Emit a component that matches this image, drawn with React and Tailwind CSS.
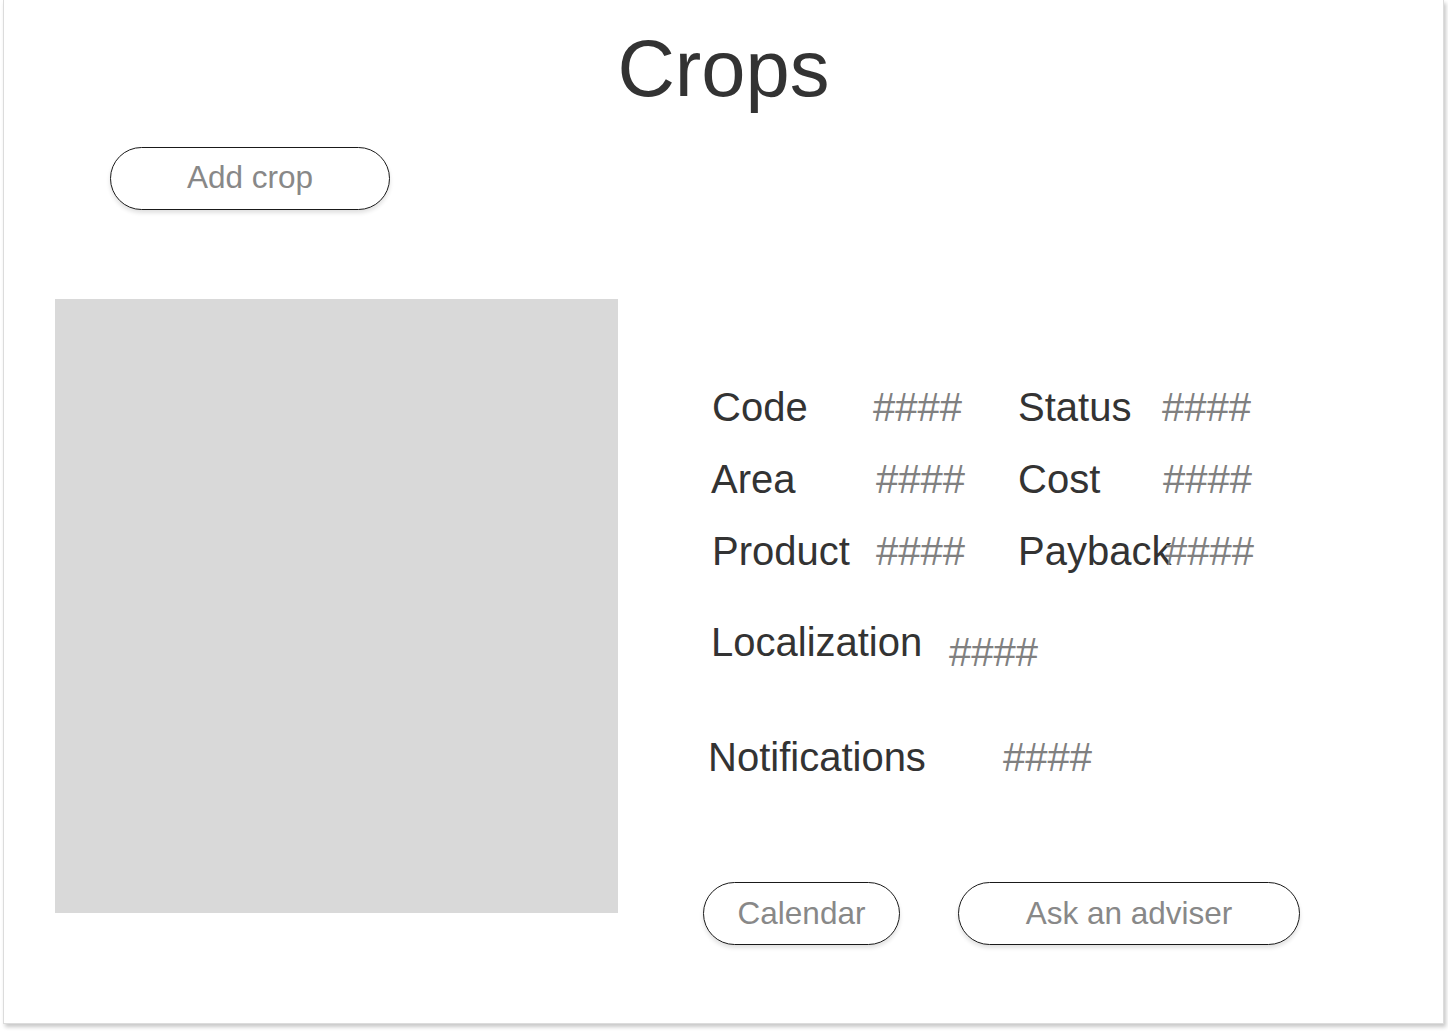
const font = { fontFamily: '"Liberation Sans", Arial, sans-serif' };

const rows = [
  [
    { label: 'Code', lw: 161 },
    { value: '####', vw: 145 },
    { label: 'Status', lw: 144 },
    { value: '####' },
  ],
  [
    { label: 'Area', lw: 165 },
    { value: '####', vw: 142 },
    { label: 'Cost', lw: 145 },
    { value: '####' },
  ],
  [
    { label: 'Product', lw: 164 },
    { value: '####', vw: 142 },
    { label: 'Payback', lw: 147 },
    { value: '####' },
  ],
];

const PillButton = ({ children, className }) => (
  <button
    className={`h-[63px] rounded-full border border-[#1a1a1a] bg-white text-[31.5px] text-[#888888] shadow-[0_3px_4px_rgba(0,0,0,0.12)] ${className}`}
  >
    {children}
  </button>
);

export default function App() {
  return (
    <div className="min-h-[1032px] w-full bg-white" style={font}>
      <div className="ml-[3px] h-[1024px] w-[1441px] border-l border-r border-b border-[#dcdcdc] bg-white shadow-[2px_3px_4px_rgba(0,0,0,0.22)]">
        {/* Title */}
        <h1 className="pt-[29px] text-center text-[79.5px] leading-none text-[#333333]">Crops</h1>

        {/* Add crop */}
        <div className="mt-[38px] pl-[106px]">
          <PillButton className="w-[280px]">Add crop</PillButton>
        </div>

        <div className="mt-[89px] flex items-start">
          {/* Image placeholder */}
          <div className="ml-[51px] h-[614px] w-[563px] bg-[#d9d9d9]" />

          {/* Details */}
          <div className="ml-[85px] flex flex-col pt-[84px] text-[40px] leading-[48px]">
            <div className="flex flex-col gap-[24px]">
              {rows.map((row, i) => (
                <div key={i} className="flex items-start">
                  {row.map((cell, j) =>
                    cell.label ? (
                      <span
                        key={j}
                        className="shrink-0 whitespace-nowrap text-[#333333]"
                        style={{ width: cell.lw, marginLeft: j === 0 ? (i === 1 ? 8 : 9) : 0 }}
                      >
                        {cell.label}
                      </span>
                    ) : (
                      <span
                        key={j}
                        className="shrink-0 whitespace-nowrap text-[#808080]"
                        style={{ width: cell.vw }}
                      >
                        {cell.value}
                      </span>
                    )
                  )}
                </div>
              ))}
            </div>

            <div className="mt-[43px] flex items-start">
              <span className="ml-[8px] w-[238px] shrink-0 text-[#333333]">Localization</span>
              <span className="mt-[10px] text-[#808080]">####</span>
            </div>

            <div className="mt-[57px] flex items-start">
              <span className="ml-[5px] w-[295px] shrink-0 text-[#333333]">Notifications</span>
              <span className="text-[#808080]">####</span>
            </div>

            <div className="mt-[101px] flex items-start">
              <PillButton className="w-[197px]">Calendar</PillButton>
              <PillButton className="ml-[58px] w-[342px]">Ask an adviser</PillButton>
            </div>
          </div>
        </div>
      </div>
    </div>
  );
}
